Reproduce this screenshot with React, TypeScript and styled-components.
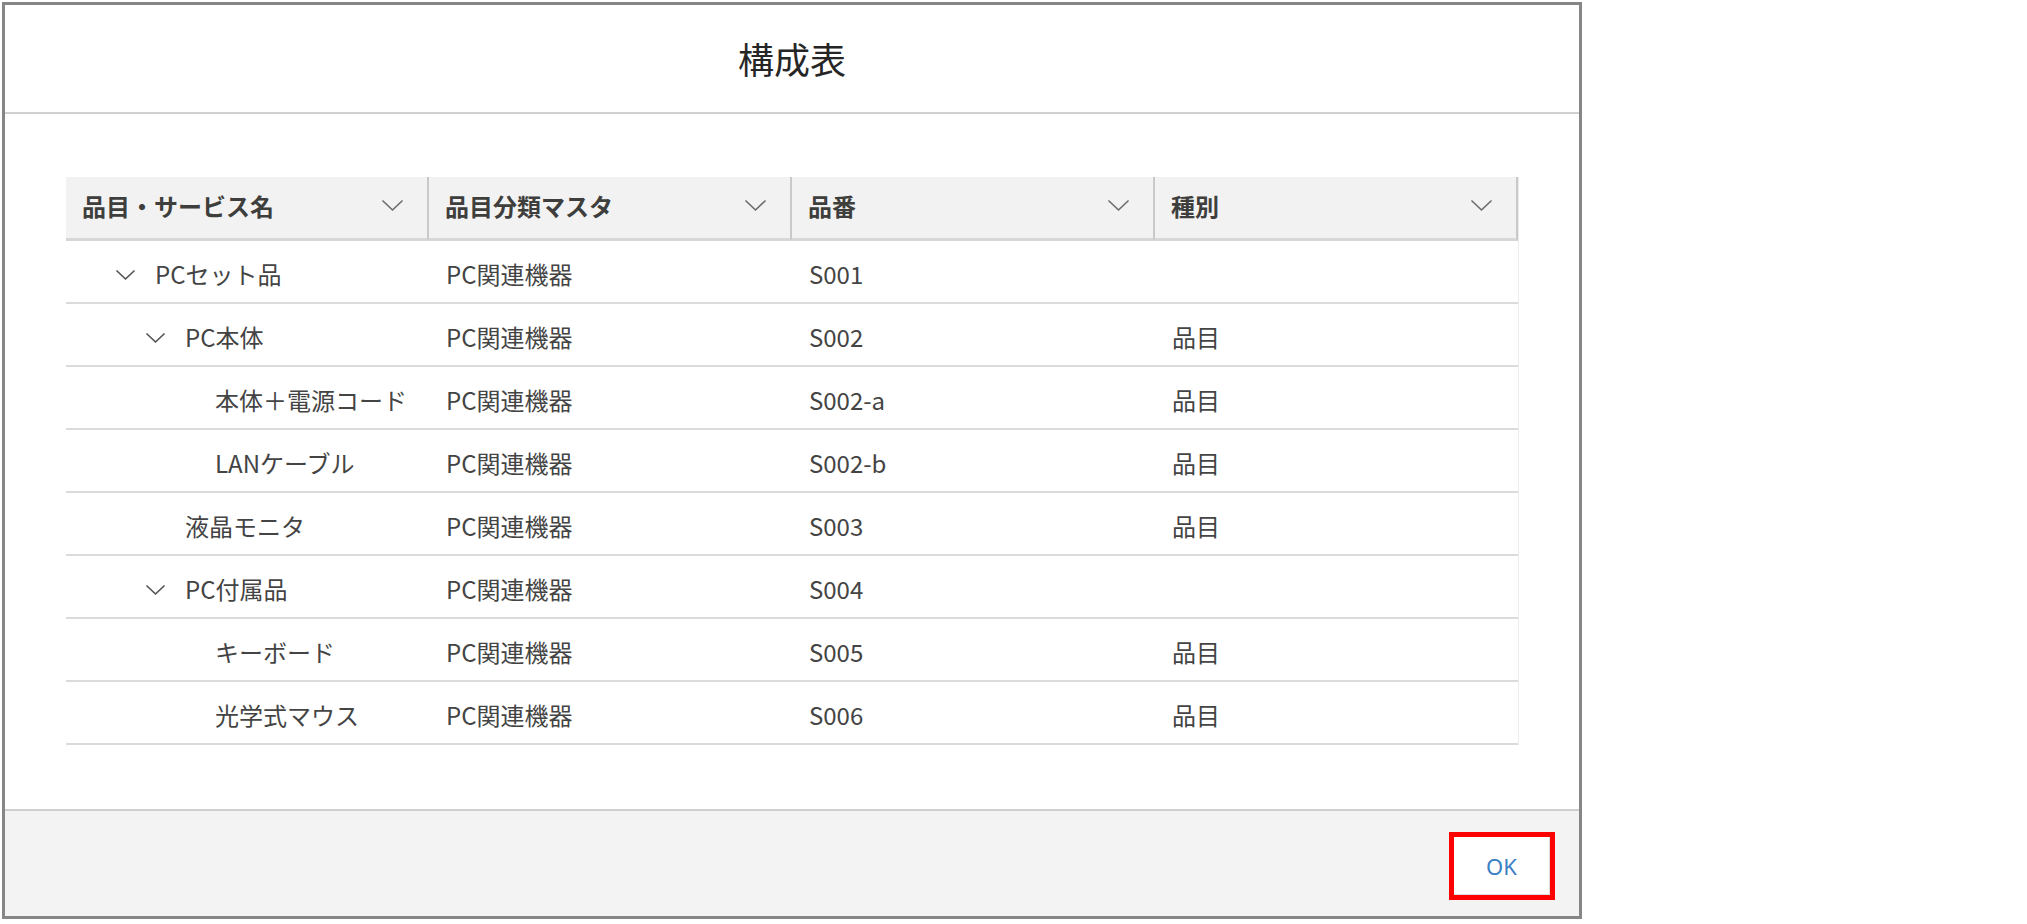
import React from "react";
import styled, { createGlobalStyle } from "styled-components";

const GlobalStyle = createGlobalStyle`
  html, body { margin: 0; padding: 0; background: #ffffff; }
  body {
    font-family: "Noto Sans CJK JP", "Noto Sans", sans-serif;
    color: #3e3e3c;
  }
  * { box-sizing: border-box; }
`;

const Page = styled.div`
  width: 2027px;
  height: 924px;
  padding: 2px;
  background: #ffffff;
`;

const Dialog = styled.section`
  width: 1580px;
  height: 917px;
  border: 3px solid #868686;
  display: flex;
  flex-direction: column;
  background: #ffffff;
`;

const Header = styled.header`
  height: 109px;
  flex: none;
  border-bottom: 2px solid #d0d0d0;
  display: flex;
  align-items: center;
  justify-content: center;
  padding-bottom: 2px;
`;

const Title = styled.h1`
  margin: 0;
  font-size: 36px;
  font-weight: 400;
  color: #262626;
  letter-spacing: 0;
`;

const Body = styled.div`
  flex: 1;
  padding: 63px 60px 0 61px;
`;

const Grid = styled.div`
  display: grid;
  grid-template-columns: repeat(4, 1fr);
  width: 1453px;
  border-right: 1px solid #ececec;
`;

const HeadCell = styled.div`
  height: 64px;
  background: #f3f2f2;
  border-bottom: 3px solid #d9d7d6;
  border-right: 2px solid #c9c9c9;
  display: flex;
  align-items: center;
  justify-content: space-between;
  padding: 0 24px 4px 16px;
  font-size: 24px;
  font-weight: 700;
  color: #3e3e3c;
`;

const Cell = styled.div<{ $level?: number }>`
  height: 63px;
  border-bottom: 2px solid #dddbda;
  display: flex;
  align-items: center;
  padding-top: 3px;
  padding-left: ${(p) => (p.$level ? 20 + p.$level * 30 : 17)}px;
  font-size: 24px;
  font-weight: 400;
  color: #444444;
  white-space: nowrap;
`;

const Toggle = styled.span`
  width: 19px;
  height: 10px;
  margin-right: 20px;
  display: inline-flex;
  flex: none;
  margin-top: 4px;
`;

const Footer = styled.footer`
  height: 107px;
  flex: none;
  border-top: 2px solid #cfcfcf;
  background: #f3f3f3;
  display: flex;
  align-items: center;
  justify-content: flex-end;
  padding: 4px 24px 0 0;
`;

const Highlight = styled.div`
  border: 5px solid #ff0000;
  display: flex;
`;

const Button = styled.button`
  width: 96px;
  height: 58px;
  background: #ffffff;
  border: none;
  border-right: 1px solid #dcdcdc;
  border-bottom: 1px solid #dcdcdc;
  font-family: "Noto Sans", "Noto Sans CJK JP", sans-serif;
  font-size: 22px;
  color: #3b7fc4;
  cursor: pointer;
  padding: 2px 0 0 0;
`;

const Chevron: React.FC<{ w: number; h: number; color: string }> = ({ w, h, color }) => (
  <svg width={w} height={h} viewBox={`0 0 ${w} ${h}`} fill="none">
    <polyline
      points={`1,1 ${w / 2},${h - 1} ${w - 1},1`}
      stroke={color}
      strokeWidth={1.7}
      strokeLinecap="round"
      strokeLinejoin="round"
    />
  </svg>
);

type Row = { name: string; level: number; expandable: boolean; cat: string; code: string; kind: string };

const columns = ["品目・サービス名", "品目分類マスタ", "品番", "種別"];

const rows: Row[] = [
  { name: "PCセット品", level: 1, expandable: true, cat: "PC関連機器", code: "S001", kind: "" },
  { name: "PC本体", level: 2, expandable: true, cat: "PC関連機器", code: "S002", kind: "品目" },
  { name: "本体＋電源コード", level: 3, expandable: false, cat: "PC関連機器", code: "S002-a", kind: "品目" },
  { name: "LANケーブル", level: 3, expandable: false, cat: "PC関連機器", code: "S002-b", kind: "品目" },
  { name: "液晶モニタ", level: 2, expandable: false, cat: "PC関連機器", code: "S003", kind: "品目" },
  { name: "PC付属品", level: 2, expandable: true, cat: "PC関連機器", code: "S004", kind: "" },
  { name: "キーボード", level: 3, expandable: false, cat: "PC関連機器", code: "S005", kind: "品目" },
  { name: "光学式マウス", level: 3, expandable: false, cat: "PC関連機器", code: "S006", kind: "品目" },
];

export default function App() {
  return (
    <Page>
      <GlobalStyle />
      <Dialog>
        <Header>
          <Title>構成表</Title>
        </Header>
        <Body>
          <Grid>
            {columns.map((c) => (
              <HeadCell key={c}>
                <span>{c}</span>
                <Chevron w={21} h={11} color="#706e6b" />
              </HeadCell>
            ))}
            {rows.map((r) => (
              <React.Fragment key={r.code}>
                <Cell $level={r.level}>
                  <Toggle>{r.expandable && <Chevron w={19} h={10} color="#555555" />}</Toggle>
                  {r.name}
                </Cell>
                <Cell>{r.cat}</Cell>
                <Cell>{r.code}</Cell>
                <Cell>{r.kind}</Cell>
              </React.Fragment>
            ))}
          </Grid>
        </Body>
        <Footer>
          <Highlight>
            <Button>OK</Button>
          </Highlight>
        </Footer>
      </Dialog>
    </Page>
  );
}
